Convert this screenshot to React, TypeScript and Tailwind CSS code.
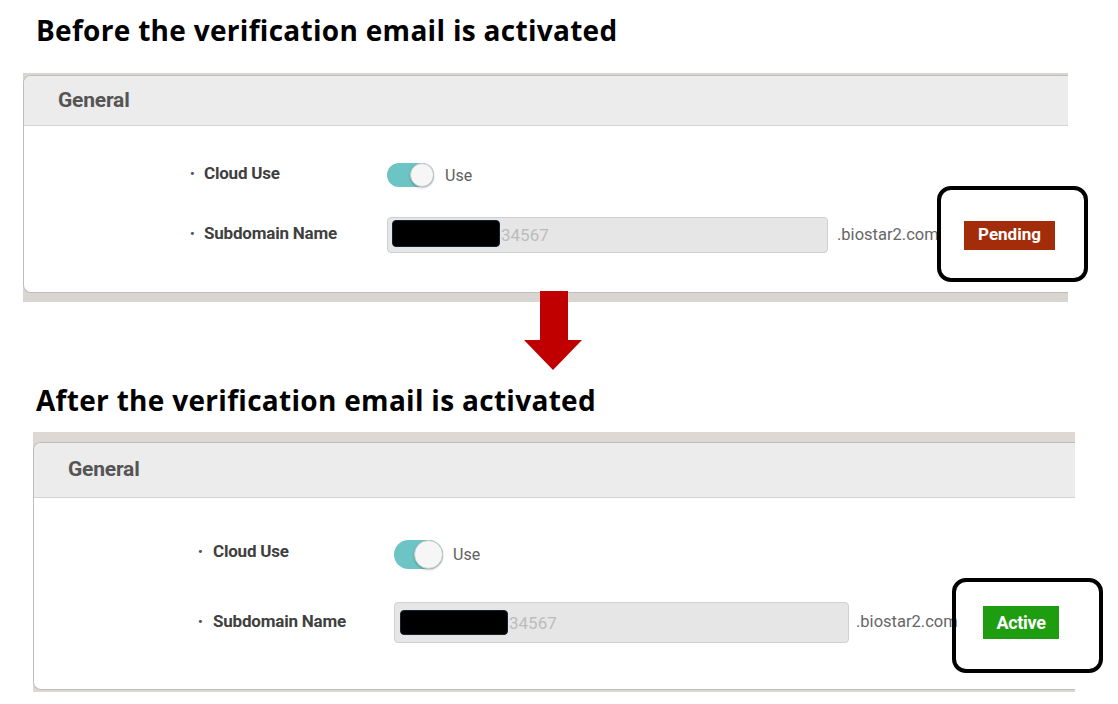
import React from "react";

const Toggle = ({ w, h }: { w: string; h: string }) => (
  <div className={`relative ${w} ${h} rounded-full bg-[#6cc4c5]`}>
    <div
      className={`absolute right-0 top-0 ${h} aspect-square rounded-full bg-[#f6f6f6] border border-[#c9c9c9] shadow-[0_1px_2px_rgba(0,0,0,0.25)]`}
    />
  </div>
);

const Redacted = ({ className }: { className: string }) => (
  <div className={`bg-black rounded-[4px] border border-[#123] ${className}`} />
);

const Before = () => (
  <div className="relative ml-[23px] w-[1045px] bg-[#d9d5d1] pt-[2px] pb-[9px]">
    <div className="bg-white border border-r-0 border-[#bdbdbd] rounded-l-[8px] overflow-hidden">
      <div className="h-[50px] bg-[#ececec] border-b border-[#d3d3d3] flex items-center pl-[34px]">
        <span className="text-[21px] font-bold text-[#555] tracking-[-0.2px]">General</span>
      </div>
      <div className="pl-[166px] pt-[37px] pb-[39px] flex flex-col gap-[30px]">
        <div className="flex items-center h-[24px]">
          <div className="w-[197px] flex items-center text-[17px] font-bold text-[#3f3f3f] tracking-[-0.2px] -mt-[3px]">
            <span className="w-[14px] text-[13px] font-bold text-[#555]">•</span>
            Cloud Use
          </div>
          <Toggle w="w-[47px]" h="h-[24px]" />
          <span className="ml-[11px] text-[16px] text-[#5e5e5e] mt-[1px]">Use</span>
        </div>
        <div className="flex items-center h-[36px]">
          <div className="w-[197px] flex items-center text-[17px] font-bold text-[#3f3f3f] tracking-[-0.2px] -mt-[2px]">
            <span className="w-[14px] text-[13px] font-bold text-[#555]">•</span>
            Subdomain Name
          </div>
          <div className="w-[441px] h-[36px] bg-[#e6e6e6] border border-[#cfcfcf] rounded-[4px] flex items-start pl-[4px] pt-[2px]">
            <Redacted className="w-[108px] h-[27px]" />
            <span className="ml-[1px] mt-[3px] text-[17px] text-[#bcbcbc]">34567</span>
          </div>
          <span className="ml-[9px] w-[127px] text-[16.5px] text-[#666]">.biostar2.com</span>
          <div className="w-[91px] h-[29px] bg-[#a32d0b] flex items-center justify-center text-white font-bold text-[17px]">
            Pending
          </div>
        </div>
      </div>
    </div>
    <div className="absolute left-[914px] top-[113px] w-[151px] h-[96px] border-[4px] border-black rounded-[14px]" />
  </div>
);

const After = () => (
  <div className="relative ml-[33px] w-[1042px] bg-[#ddd8d4] pt-[10px] pb-[2px]">
    <div className="bg-white border border-r-0 border-[#bdbdbd] rounded-l-[8px] overflow-hidden">
      <div className="h-[55px] bg-[#ececec] border-b border-[#d3d3d3] flex items-center pl-[34px]">
        <span className="text-[21px] font-bold text-[#555] tracking-[-0.2px]">General</span>
      </div>
      <div className="pl-[164px] pt-[42px] pb-[46px] flex flex-col gap-[33px]">
        <div className="flex items-center h-[29px]">
          <div className="w-[196px] flex items-center text-[17px] font-bold text-[#3f3f3f] tracking-[-0.2px] -mt-[5px]">
            <span className="w-[15px] text-[13px] font-bold text-[#555]">•</span>
            Cloud Use
          </div>
          <Toggle w="w-[49px]" h="h-[29px]" />
          <span className="ml-[10px] text-[16px] text-[#5e5e5e]">Use</span>
        </div>
        <div className="flex items-center h-[41px]">
          <div className="w-[196px] flex items-center text-[17px] font-bold text-[#3f3f3f] tracking-[-0.2px] -mt-[2px]">
            <span className="w-[15px] text-[13px] font-bold text-[#555]">•</span>
            Subdomain Name
          </div>
          <div className="w-[455px] h-[41px] bg-[#e6e6e6] border border-[#cfcfcf] rounded-[4px] flex items-start pl-[5px] pt-[7px]">
            <Redacted className="w-[108px] h-[25px]" />
            <span className="ml-[1px] mt-[1px] text-[17px] text-[#bcbcbc]">34567</span>
          </div>
          <span className="ml-[7px] w-[127px] text-[16.5px] text-[#666]">.biostar2.com</span>
          <div className="w-[76px] h-[33px] bg-[#1f9d10] flex items-center justify-center text-white font-bold text-[18px] tracking-[-0.3px]">
            Active
          </div>
        </div>
      </div>
    </div>
    <div className="absolute left-[919px] top-[146px] w-[151px] h-[95px] border-[4px] border-black rounded-[14px]" />
  </div>
);

const Arrow = () => (
  <div className="relative z-10 -mt-[11px] ml-[524px] w-[58px] h-[79px]">
    <svg width="58" height="79" viewBox="0 0 58 79">
      <polygon points="16,0 44,0 44,49 58,49 29,79 0,49 16,49" fill="#c00000" />
    </svg>
  </div>
);

export default function App() {
  return (
    <div className="w-[1118px] h-[704px] bg-white overflow-hidden font-['Roboto',sans-serif]">
      <div className="h-[73px] pl-[36px] pt-[10px] font-['Open_Sans',sans-serif] font-bold text-[28px] leading-[40px] text-black tracking-[0.3px]">
        Before the verification email is activated
      </div>
      <Before />
      <Arrow />
      <div className="h-[62px] pl-[36px] pt-[10px] font-['Open_Sans',sans-serif] font-bold text-[28px] leading-[40px] text-black tracking-[0.3px]">
        After the verification email is activated
      </div>
      <After />
    </div>
  );
}
